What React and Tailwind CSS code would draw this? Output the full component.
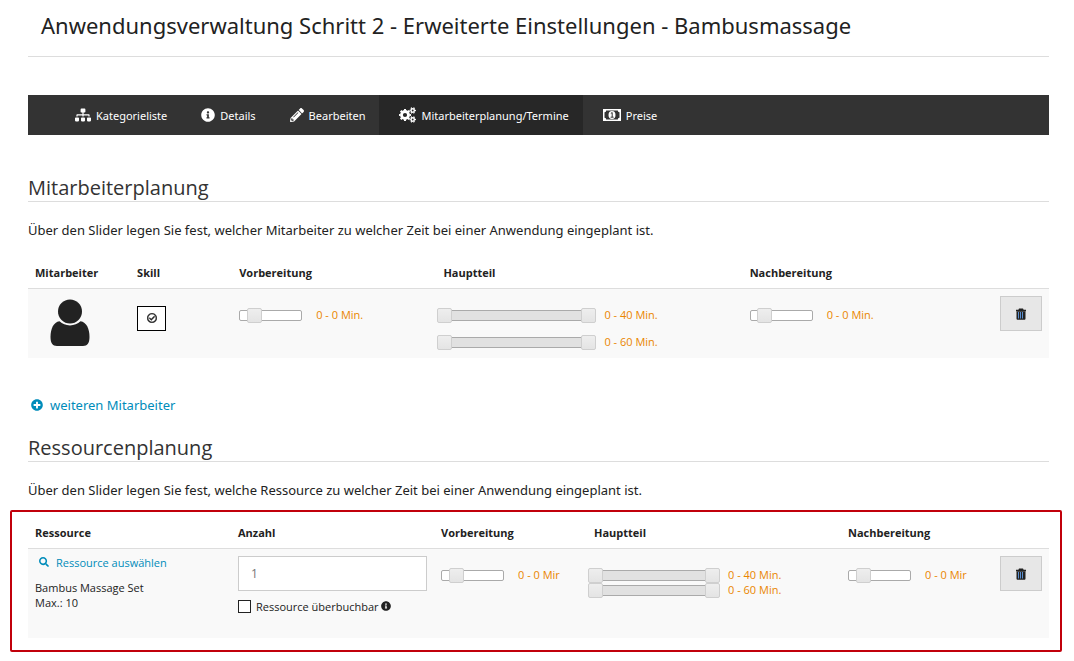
import { useState } from 'react';
import { FaSitemap, FaInfoCircle, FaPencilAlt, FaPlusCircle, FaSearch, FaRegCheckCircle } from 'react-icons/fa';

function MoneyIcon() {
  return (
    <svg viewBox="0 0 18 12" className="h-3 w-[18px]" fill="none" aria-hidden="true">
      <rect x="0.750" y="0.750" width="16.500" height="10.500" stroke="currentColor" strokeWidth="1.500" />
      <path d="M1 1h2.200A2 2 0 0 1 1 3.200zM17 1h-2.200A2 2 0 0 0 17 3.200zM1 11h2.200A2 2 0 0 0 1 8.800zM17 11h-2.200A2 2 0 0 1 17 8.800z" fill="currentColor" />
      <ellipse cx="9" cy="6" rx="3.500" ry="4" fill="currentColor" />
      <path d="M7.800 4.500 9.200 3.500v4.600M7.600 8.200h3" stroke="#333" strokeWidth="1" />
    </svg>
  );
}

// one large gear with two small ones stacked on its right
function CogsIcon() {
  return (
    <svg viewBox="0 0 17 16" className="h-4 w-[17px]" fill="none" stroke="currentColor" aria-hidden="true">
      <circle cx="6" cy="8" r="3.500" strokeWidth="2.800" />
      <circle cx="6" cy="8" r="5.200" strokeWidth="1.800" pathLength="16" strokeDasharray="1 1" strokeDashoffset="0.500" />
      <circle cx="13.700" cy="3.500" r="1.700" strokeWidth="1.500" />
      <circle cx="13.700" cy="3.500" r="2.700" strokeWidth="1.100" pathLength="12" strokeDasharray="1 1" strokeDashoffset="0.500" />
      <circle cx="13.700" cy="12.500" r="1.700" strokeWidth="1.500" />
      <circle cx="13.700" cy="12.500" r="2.700" strokeWidth="1.100" pathLength="12" strokeDasharray="1 1" strokeDashoffset="0.500" />
    </svg>
  );
}

function PersonIcon() {
  return (
    <svg viewBox="0 0 40 48" className="ml-[15px] h-12 w-10" fill="#222" role="img" aria-label="Mitarbeiter">
      <circle cx="20" cy="12.500" r="12" />
      <path d="M9.500 22.300C12.300 24.900 15.900 26.400 20 26.400s7.700-1.500 10.500-4.100c6 .7 9 7.700 9 15.700 0 6-2 9-6.500 9H7c-4.500 0-6.500-3-6.500-9 0-8 3-15 9-15.700z" />
    </svg>
  );
}

function TrashIcon() {
  return (
    <svg viewBox="0 0 12 12" className="size-3" aria-hidden="true">
      <path d="M4 0.500h4l.6 1.200h2.400v1.600H1V1.700h2.400z" fill="#222" />
      <path d="M1.500 3.300h9v7.100c0 .8-.4 1.300-1.200 1.300H2.700c-.8 0-1.200-.5-1.200-1.300z" fill="#222" />
      <path d="M3.500 4v6.500M5.500 4v6.500M7.500 4v6.500" stroke="#5b8fd0" strokeWidth="1" />
    </svg>
  );
}

const navItems = [
  { label: 'Kategorieliste', icon: <FaSitemap className="size-4" /> },
  { label: 'Details', icon: <FaInfoCircle className="size-[14px]" /> },
  { label: 'Bearbeiten', icon: <FaPencilAlt className="size-[14px]" /> },
  { label: 'Mitarbeiterplanung/Termine', icon: <CogsIcon />, active: true },
  { label: 'Preise', icon: <MoneyIcon /> },
];

const thumb =
  'appearance-none bg-transparent outline-none [&::-webkit-slider-thumb]:appearance-none [&::-webkit-slider-thumb]:pointer-events-auto [&::-webkit-slider-thumb]:h-[15px] [&::-webkit-slider-thumb]:w-[15px] [&::-webkit-slider-thumb]:rounded-xs [&::-webkit-slider-thumb]:border [&::-webkit-slider-thumb]:border-[#cfcfcf] [&::-webkit-slider-thumb]:bg-linear-to-b [&::-webkit-slider-thumb]:from-[#eee] [&::-webkit-slider-thumb]:to-[#e4e4e4]';

function PointSlider({ label, unit = 'Min.' }) {
  const [value, setValue] = useState(16);
  return (
    <div className="flex h-[15px] items-center">
      <div className="relative h-[11px] w-[63px] rounded-xs border border-[#aaa] bg-white">
        <input type="range" aria-label={label} value={value} onChange={e => setValue(e.target.value)} className={`absolute -inset-x-px -top-[3px] h-[15px] w-[63px] ${thumb}`} />
      </div>
      <output className="ml-[14px] pb-px whitespace-nowrap text-[#ea8600]">0 - 0 {unit}</output>
    </div>
  );
}

function RangeSlider({ label, max, wide }) {
  const [from, setFrom] = useState(0);
  const [to, setTo] = useState(max);
  return (
    <div className="-ml-[6px] flex h-[15px] items-center">
      <div className={wide ? 'relative h-[11px] w-[159px] border-y border-[#aaa] bg-[#e1e1e1]' : 'relative h-[11px] w-[132px] border-y border-[#aaa] bg-[#e1e1e1]'}>
        <input type="range" aria-label={`${label} von`} max={max} value={from} onChange={e => setFrom(Math.min(Number(e.target.value), to))} className={`pointer-events-none absolute inset-x-0 -top-[3px] h-[15px] w-full ${thumb}`} />
        <input type="range" aria-label={`${label} bis`} max={max} value={to} onChange={e => setTo(Math.max(Number(e.target.value), from))} className={`pointer-events-none absolute inset-x-0 -top-[3px] h-[15px] w-full ${thumb}`} />
      </div>
      <output className="ml-2 pb-px whitespace-nowrap text-[#ea8600]">{from} - {to} Min.</output>
    </div>
  );
}

function DeleteButton() {
  return (
    <button type="button" aria-label="Löschen" className="inline-flex h-[35px] w-[42px] items-center justify-center border border-[#ccc] bg-[#e7e7e7] pt-px">
      <TrashIcon />
    </button>
  );
}

function Section({ title, text }) {
  return (
    <>
      <h2 className="border-b border-[#ddd] pt-[2px] text-[20px] leading-[26px] text-[#333]">{title}</h2>
      <p className="mt-[18px] font-['Noto_Sans',sans-serif] text-[13px] leading-5">{text}</p>
    </>
  );
}

function HeadRow({ labels }) {
  return (
    <thead>
      <tr className="h-[30px] border-b border-[#ddd]">
        {labels.map(l => <th key={l} className="px-[7px] text-left font-bold">{l}</th>)}
        <td />
      </tr>
    </thead>
  );
}

export default function App() {
  return (
    <main className="min-h-screen bg-white pr-3 pb-[9px] pl-[10px] font-['Open_Sans',sans-serif] text-[11px] leading-[15px] text-[#222]">
      <div className="pr-[13px] pl-[18px]">
        <h1 className="border-b border-[#ddd] px-[13px] pt-[9px] pb-[15px] font-['Noto_Sans',sans-serif] text-[22px] leading-8">
          Anwendungsverwaltung Schritt 2 - Erweiterte Einstellungen - Bambusmassage
        </h1>

        <nav className="mt-[38px] flex h-10 bg-[#333] pl-[27px] font-['Noto_Sans',sans-serif] text-[11px] text-white">
          {navItems.map(item => (
            <a key={item.label} href="#" className={item.active ? 'flex items-center gap-[5px] bg-[#272727] pr-[14px] pl-5' : 'flex items-center gap-[5px] pr-[14px] pl-5'}>
              {item.icon}
              {item.label}
            </a>
          ))}
        </nav>

        <section className="pt-[38px]">
          <Section title="Mitarbeiterplanung" text="Über den Slider legen Sie fest, welcher Mitarbeiter zu welcher Zeit bei einer Anwendung eingeplant ist." />
          <table className="mt-[18px] w-full table-fixed border-collapse">
            <colgroup>
              <col className="w-[10%]" /><col className="w-[10%]" /><col className="w-[20%]" /><col className="w-[30%]" /><col className="w-[20%]" /><col className="w-[10%]" />
            </colgroup>
            <HeadRow labels={['Mitarbeiter', 'Skill', 'Vorbereitung', 'Hauptteil', 'Nachbereitung']} />
            <tbody>
              <tr className="h-[70px] bg-[#f9f9f9] align-top">
                <td className="px-[7px] pt-[10px]"><PersonIcon /></td>
                <td className="px-[7px] pt-[17px]">
                  <button type="button" aria-label="Skill" className="flex h-[25px] w-[29px] items-center justify-center border border-black bg-white">
                    <FaRegCheckCircle className="size-[10px]" stroke="currentColor" strokeWidth="24" />
                  </button>
                </td>
                <td className="px-[7px] pt-[19px]"><PointSlider label="Vorbereitung" /></td>
                <td className="px-[7px] pt-[19px]">
                  <div className="flex flex-col gap-3">
                    <RangeSlider label="Hauptteil 1" max={40} wide />
                    <RangeSlider label="Hauptteil 2" max={60} wide />
                  </div>
                </td>
                <td className="px-[7px] pt-[19px]"><PointSlider label="Nachbereitung" /></td>
                <td className="px-[7px] pt-[7px] text-right"><DeleteButton /></td>
              </tr>
            </tbody>
          </table>
          <a href="#" className="mt-[37px] ml-[3px] inline-flex items-center gap-[7px] font-['Noto_Sans',sans-serif] text-[13px] leading-5 text-[#008cba]">
            <FaPlusCircle className="size-3" />
            weiteren Mitarbeiter
          </a>
        </section>

        <section className="pt-[18px]">
          <Section title="Ressourcenplanung" text="Über den Slider legen Sie fest, welche Ressource zu welcher Zeit bei einer Anwendung eingeplant ist." />
        </section>
      </div>

      <div className="mt-[10px] rounded-xs border-2 border-[#c1000b] pt-[6px] pr-[11px] pb-3 pl-4">
        <table className="w-full table-fixed border-collapse">
          <colgroup>
            <col className="w-[203px]" /><col className="w-[203px]" /><col className="w-[153px]" /><col className="w-[254px]" /><col className="w-[152px]" /><col className="w-[56px]" />
          </colgroup>
          <HeadRow labels={['Ressource', 'Anzahl', 'Vorbereitung', 'Hauptteil', 'Nachbereitung']} />
          <tbody>
            <tr className="h-[90px] bg-[#f9f9f9] align-top">
              <td className="px-[7px] pt-[6px]">
                <a href="#" className="ml-1 inline-flex items-center gap-[7px] text-[#008cba]">
                  <FaSearch className="size-[10px]" />
                  Ressource auswählen
                </a>
                <p className="mt-[10px]">Bambus Massage Set<br />Max.: 10</p>
              </td>
              <td className="px-[7px] pt-[7px]">
                <input type="text" aria-label="Anzahl" defaultValue="1" className="block h-[35px] w-full border border-[#ccc] bg-white px-3 text-[12px] text-[#777]" />
                <div className="mt-2 flex items-center">
                  <input id="overbook" type="checkbox" className="size-[13px] appearance-none border border-[#222] bg-white checked:bg-[#222]" />
                  <label htmlFor="overbook" className="ml-[5px]">Ressource überbuchbar</label>
                  <FaInfoCircle className="ml-[2px] size-[10px]" />
                </div>
              </td>
              <td className="px-[7px] pt-[19px]"><PointSlider label="Vorbereitung Ressource" unit="Mir" /></td>
              <td className="px-[7px] pt-[19px]">
                <RangeSlider label="Hauptteil Ressource 1" max={40} />
                <RangeSlider label="Hauptteil Ressource 2" max={60} />
              </td>
              <td className="px-[7px] pt-[19px]"><PointSlider label="Nachbereitung Ressource" unit="Mir" /></td>
              <td className="px-[7px] pt-[7px] text-right"><DeleteButton /></td>
            </tr>
          </tbody>
        </table>
      </div>
    </main>
  );
}
